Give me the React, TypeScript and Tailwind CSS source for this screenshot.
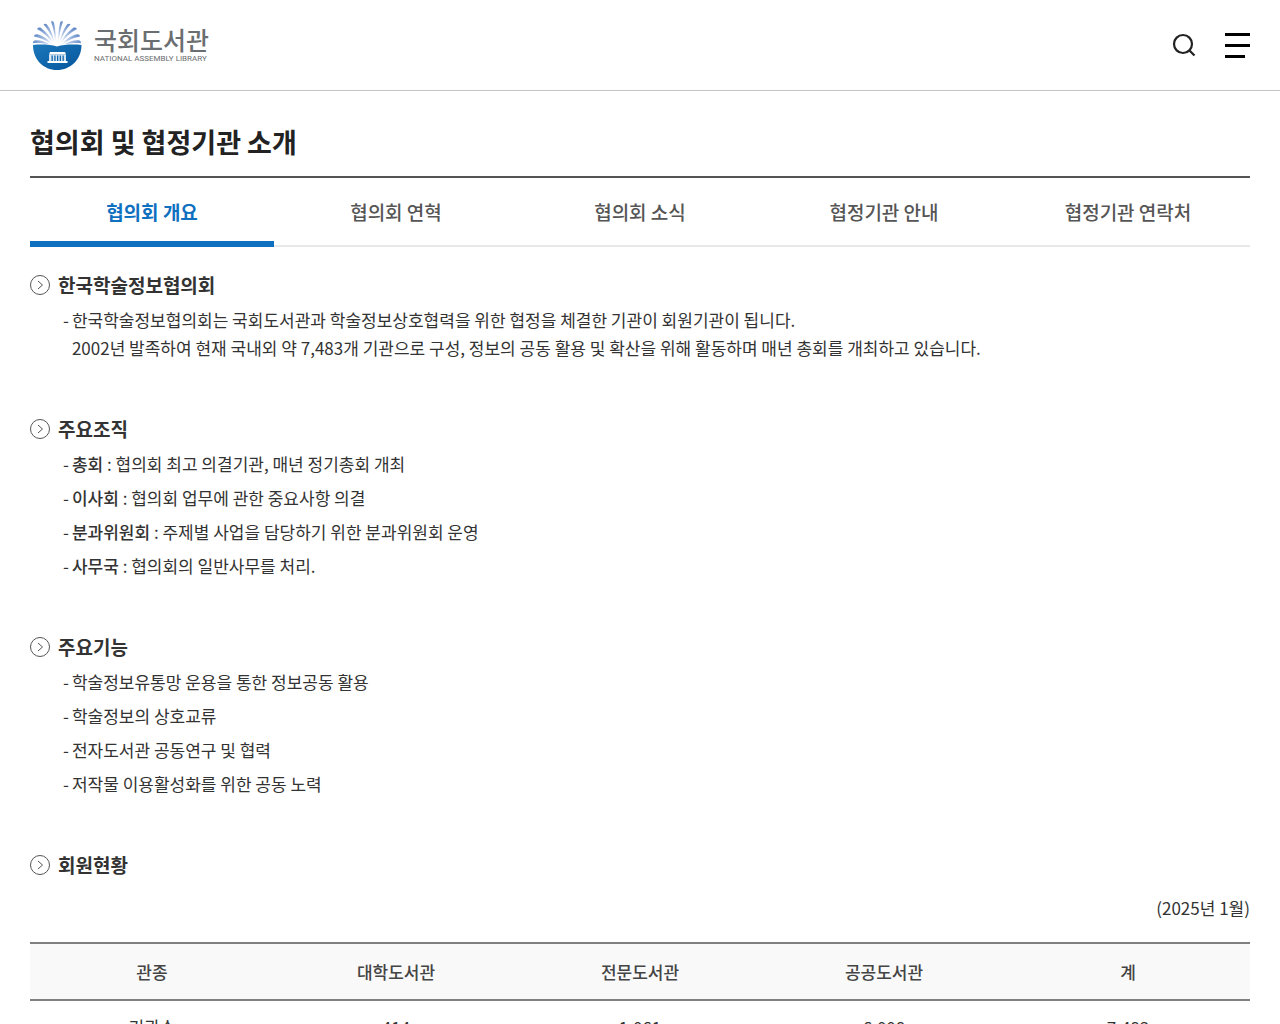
const tabs = ["협의회 개요", "협의회 연혁", "협의회 소식", "협정기관 안내", "협정기관 연락처"];

const organization = [
  { name: "총회", desc: "협의회 최고 의결기관, 매년 정기총회 개최" },
  { name: "이사회", desc: "협의회 업무에 관한 중요사항 의결" },
  { name: "분과위원회", desc: "주제별 사업을 담당하기 위한 분과위원회 운영" },
  { name: "사무국", desc: "협의회의 일반사무를 처리." },
];

const functions = [
  "학술정보유통망 운용을 통한 정보공동 활용",
  "학술정보의 상호교류",
  "전자도서관 공동연구 및 협력",
  "저작물 이용활성화를 위한 공동 노력",
];

const members = [
  { type: "대학도서관", count: "414" },
  { type: "전문도서관", count: "1,061" },
  { type: "공공도서관", count: "6,008" },
  { type: "계", count: "7,483" },
];

function LogoMark() {
  return (
    <svg viewBox="0 0 50 50" className="size-[50px]" aria-hidden="true">
      <defs>
        <linearGradient id="bowl" x1="0" y1="0" x2="1" y2="1">
          <stop offset="0" stopColor="#1c78bb" />
          <stop offset="1" stopColor="#06559b" />
        </linearGradient>
        <radialGradient id="page" gradientUnits="userSpaceOnUse" cx="25" cy="26" r="26">
          <stop offset="0.15" stopColor="#fff" />
          <stop offset="0.55" stopColor="#a9c0e4" />
          <stop offset="1" stopColor="#5f86c6" />
        </radialGradient>
      </defs>
      {/* pages, left then right */}
      <g fill="url(#page)">
        <path d="M23.500 24C22.800 16 21.500 8 19 1.500c1.500-.5 2.700.2 3 1.500 1.500 6 2 14 1.500 21z" />
        <path d="M22.500 24C20 17 16.500 9.500 11.500 4.500c1.300-1.300 2.700-1 3.500 0 4 5.500 6.500 12 7.500 19.500z" />
        <path d="M21.500 24C17 18 12 12.500 5 9c.8-1.700 2.300-2 3.800-1.200C14.500 12 19 17.500 21.500 24z" />
        <path d="M20 24.500C14.500 20.500 9 18 2 16.500c.2-1.800 1.500-2.600 3-2.300 6 1.300 11.500 5 15 10.300z" />
        <path d="M18.500 25C13 23.300 7.500 22.900 1 23.200c-.2-1.800 1-2.900 2.700-2.900 5.800.1 11 1.600 14.800 4.700z" />
        <path d="M26.500 24c.7-8 2-16 4.500-22.500-1.500-.5-2.700.2-3 1.500-1.500 6-2 14-1.500 21z" />
        <path d="M27.500 24c2.500-7 6-14.500 11-19.500-1.300-1.300-2.700-1-3.500 0-4 5.500-6.500 12-7.500 19.500z" />
        <path d="M28.500 24C33 18 38 12.500 45 9c-.8-1.700-2.300-2-3.800-1.200C35.500 12 31 17.500 28.500 24z" />
        <path d="M30 24.500c5.500-4 11-6.500 18-8-.2-1.800-1.500-2.600-3-2.300-6 1.300-11.500 5-15 10.300z" />
        <path d="M31.500 25c5.500-1.700 11-2.100 17.500-1.800.2-1.800-1-2.900-2.700-2.900-5.800.1-11 1.600-14.800 4.700z" />
      </g>
      {/* bowl */}
      <path d="M1 25c8-.8 17-.6 24 1.600 7-2.200 16-2.400 24.500-1.600C49.500 39.500 38.500 50 25 50S1 39.500 1 25z" fill="url(#bowl)" />
      {/* library building */}
      <path d="M18 32h15l1 2.500H17zM15.500 41h20v2h-20z" fill="#fff" />
      <path d="M17 34.500h17V41H17z" fill="#d6e6f4" />
      <path d="M19.500 35.500h1.300V41h-1.300zM22.300 35.500h1.300V41h-1.300zM25 35.500h1.300V41H25zM27.700 35.500H29V41h-1.300zM30.500 35.500h1.300V41h-1.300z" fill="#1267ac" />
    </svg>
  );
}

function SectionTitle({ children }: { children: string }) {
  return (
    <h2 className="flex items-center gap-2 text-[19px] leading-[30px] font-bold">
      <svg viewBox="0 0 20 20" className="size-5 shrink-0" fill="none" stroke="#555" aria-hidden="true">
        <circle cx="10" cy="10" r="9.500" />
        <path d="M8 6l4.500 4L8 14" />
      </svg>
      {children}
    </h2>
  );
}

export default function App() {
  return (
    <div className="min-h-screen bg-white text-[17px] leading-7 text-[#333] font-['Noto_Sans_CJK_KR',sans-serif]">
      <header className="flex h-[91px] items-center justify-between border-b border-[#c4c4c4] px-[30px]">
        <a href="#" className="flex items-center gap-3 text-[#6b6e70]">
          <span className="pl-0.5">
            <LogoMark />
          </span>
          <span className="flex flex-col">
            <span className="text-[25px] leading-7 font-medium">국회도서관</span>
            <span className="font-[Roboto,sans-serif] text-[8px] leading-3">NATIONAL ASSEMBLY LIBRARY</span>
          </span>
        </a>
        <div className="flex items-center gap-7">
          <button type="button" aria-label="검색">
            <svg viewBox="0 0 26 26" className="size-[26px]" fill="none" stroke="#222" strokeWidth="2.200" aria-hidden="true">
              <circle cx="12" cy="12" r="9" />
              <path d="M18.500 18.500l5 5" />
            </svg>
          </button>
          <button type="button" aria-label="전체메뉴" className="flex flex-col gap-2">
            <span className="h-[3px] w-[25px] bg-black" />
            <span className="h-[3px] w-[25px] bg-black" />
            <span className="h-[3px] w-5 bg-black" />
          </button>
        </div>
      </header>

      <main className="px-[30px] pb-16">
        <h1 className="border-b-2 border-[#555] pt-8 pb-[15px] text-[27px] leading-[38px] font-bold text-[#222]">
          협의회 및 협정기관 소개
        </h1>

        <nav className="grid grid-cols-5 text-center text-[19px] font-medium text-[#555]">
          {tabs.map((tab, i) => (
            <a
              key={tab}
              href="#"
              aria-current={i === 0 ? "page" : undefined}
              className={
                i === 0
                  ? "h-[69px] border-b-6 border-[#1070c0] pt-5 font-bold text-[#1070c0]"
                  : "h-[69px] border-b-2 border-[#e8e8e8] pt-5"
              }
            >
              {tab}
            </a>
          ))}
        </nav>

        <div className="flex flex-col gap-[52px] pt-[23px]">
          <section>
            <SectionTitle>한국학술정보협의회</SectionTitle>
            <ul className="pt-1.5 pl-[33px]">
              <li className="flex gap-[3px]">
                <span>-</span>
                <p>
                  한국학술정보협의회는 국회도서관과 학술정보상호협력을 위한 협정을 체결한 기관이 회원기관이 됩니다.
                  <br />
                  2002년 발족하여 현재 국내외 약 7,483개 기관으로 구성, 정보의 공동 활용 및 확산을 위해 활동하며 매년 총회를 개최하고 있습니다.
                </p>
              </li>
            </ul>
          </section>

          <section>
            <SectionTitle>주요조직</SectionTitle>
            <ul className="flex flex-col gap-1.5 pt-1.5 pl-[33px]">
              {organization.map(({ name, desc }) => (
                <li key={name} className="flex gap-[3px]">
                  <span>-</span>
                  <p>
                    <strong className="font-medium">{name}</strong> : {desc}
                  </p>
                </li>
              ))}
            </ul>
          </section>

          <section>
            <SectionTitle>주요기능</SectionTitle>
            <ul className="flex flex-col gap-1.5 pt-1.5 pl-[33px]">
              {functions.map((item) => (
                <li key={item} className="flex gap-[3px]">
                  <span>-</span>
                  <p>{item}</p>
                </li>
              ))}
            </ul>
          </section>

          <section>
            <SectionTitle>회원현황</SectionTitle>
            <p className="pt-3.5 pb-5 text-right">(2025년 1월)</p>
            <table className="w-full table-fixed text-center">
              <thead className="border-y-2 border-[#808080] bg-[#f9f9f9] text-[#444]">
                <tr className="h-[57px]">
                  <th scope="col" className="font-medium">관종</th>
                  {members.map(({ type }) => (
                    <th key={type} scope="col" className="font-medium">{type}</th>
                  ))}
                </tr>
              </thead>
              <tbody>
                <tr className="h-[53px] border-b border-[#ddd]">
                  <th scope="row" className="font-normal">기관수</th>
                  {members.map(({ type, count }) => (
                    <td key={type}>{count}</td>
                  ))}
                </tr>
              </tbody>
            </table>
          </section>
        </div>
      </main>
    </div>
  );
}
